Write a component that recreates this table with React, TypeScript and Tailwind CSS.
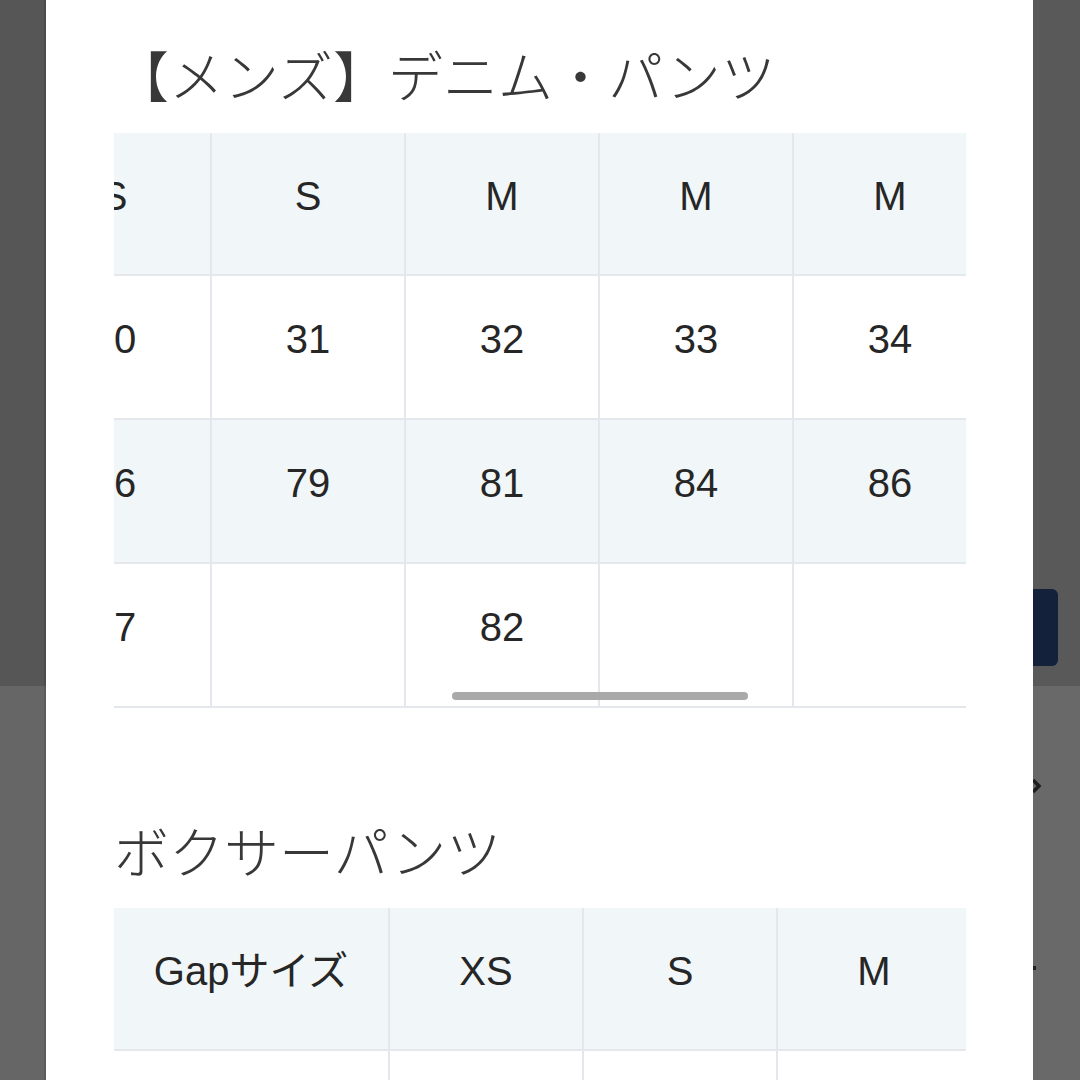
import { useLayoutEffect, useRef } from 'react';

const font = { fontFamily: '"Liberation Sans", Arial, "Noto Sans CJK JP", sans-serif' };
const jpFont = { fontFamily: '"Noto Sans CJK JP", "Noto Sans", sans-serif' };

const denimRows: string[][] = [
  ['Gapサイズ', 'XXS', 'XS', 'XS', 'S', 'S', 'M', 'M', 'M', 'L', 'L', 'XL'],
  ['ウエスト', '27', '28', '29', '30', '31', '32', '33', '34', '36', '38', '40'],
  ['ヒップ', '69', '71', '74', '76', '79', '81', '84', '86', '91', '97', '102'],
  ['股下', '', '', '', '77', '', '82', '', '', '86', '', ''],
];

const boxerRows: string[][] = [
  ['Gapサイズ', 'XS', 'S', 'M', 'L', 'XL', 'XXL'],
  ['ウエスト', '66-71', '71-76', '76-81', '81-86', '86-91', '91-97'],
];

function SizeTable({ rows, scroll }: { rows: string[][]; scroll: number }) {
  const ref = useRef<HTMLDivElement>(null);
  useLayoutEffect(() => {
    if (ref.current) ref.current.scrollLeft = scroll;
  }, [scroll]);

  return (
    <div className="relative">
      <div ref={ref} className="overflow-hidden">
        <div className="w-max" style={font}>
          {rows.map((row, ri) => (
            <div
              key={ri}
              className={`flex border-b-2 border-[#e4e7eb] ${ri === 0 ? 'h-[143px]' : 'h-[144px]'} ${ri % 2 === 0 ? 'bg-[#f1f6f8]' : 'bg-white'}`}
            >
              {row.map((cell, ci) => (
                <div
                  key={ci}
                  className={`flex shrink-0 items-center justify-center border-r-2 border-[#e4e7eb] pb-[16px] text-[40px] text-[#262626] ${ci === 0 ? 'w-[276px]' : 'w-[194px]'}`}
                >
                  {cell}
                </div>
              ))}
            </div>
          ))}
        </div>
      </div>
      {scroll > 0 && (
        <div className="absolute bottom-[8px] left-[338px] h-[8px] w-[296px] rounded-full bg-[#a9a9a9]" />
      )}
    </div>
  );
}

export default function App() {
  return (
    <div className="flex h-[1080px] w-[1080px] overflow-hidden">
      <div className="flex w-[46px] shrink-0 flex-col">
        <div className="h-[686px] border-r-2 border-[#4c4c4c] bg-[#565656]" />
        <div className="flex-1 border-r-2 border-[#5c5c5c] bg-[#666666]" />
      </div>

      <div className="w-[987px] shrink-0 bg-white pl-[68px] pr-[67px]">
        <h2 className="mt-[46px] mb-[32px] h-[55px] text-[55px] leading-[55px] font-light text-[#383838]" style={jpFont}>
          【メンズ】デニム・パンツ
        </h2>
        <SizeTable rows={denimRows} scroll={954} />

        <h2 className="mt-[114px] mb-[31px] h-[55px] text-[55px] leading-[55px] font-light text-[#383838]" style={jpFont}>
          ボクサーパンツ
        </h2>
        <SizeTable rows={boxerRows} scroll={0} />
      </div>

      <div className="flex w-[47px] shrink-0 flex-col">
        <div className="flex h-[686px] flex-col bg-[#595959]">
          <div className="mt-[589px] h-[77px] w-[25px] rounded-r-md bg-[#14213a]" />
        </div>
        <div className="flex flex-1 flex-col bg-[#696969]">
          <svg className="mt-[90px] h-[20px] w-[10px]" viewBox="0 0 10 20">
            <path d="M0 4 L6 10 L0 16" fill="none" stroke="#1e1e1e" strokeWidth="3.5" />
          </svg>
          <div className="mt-[170px] h-[4px] w-[3px] bg-[#222]" />
        </div>
      </div>
    </div>
  );
}
